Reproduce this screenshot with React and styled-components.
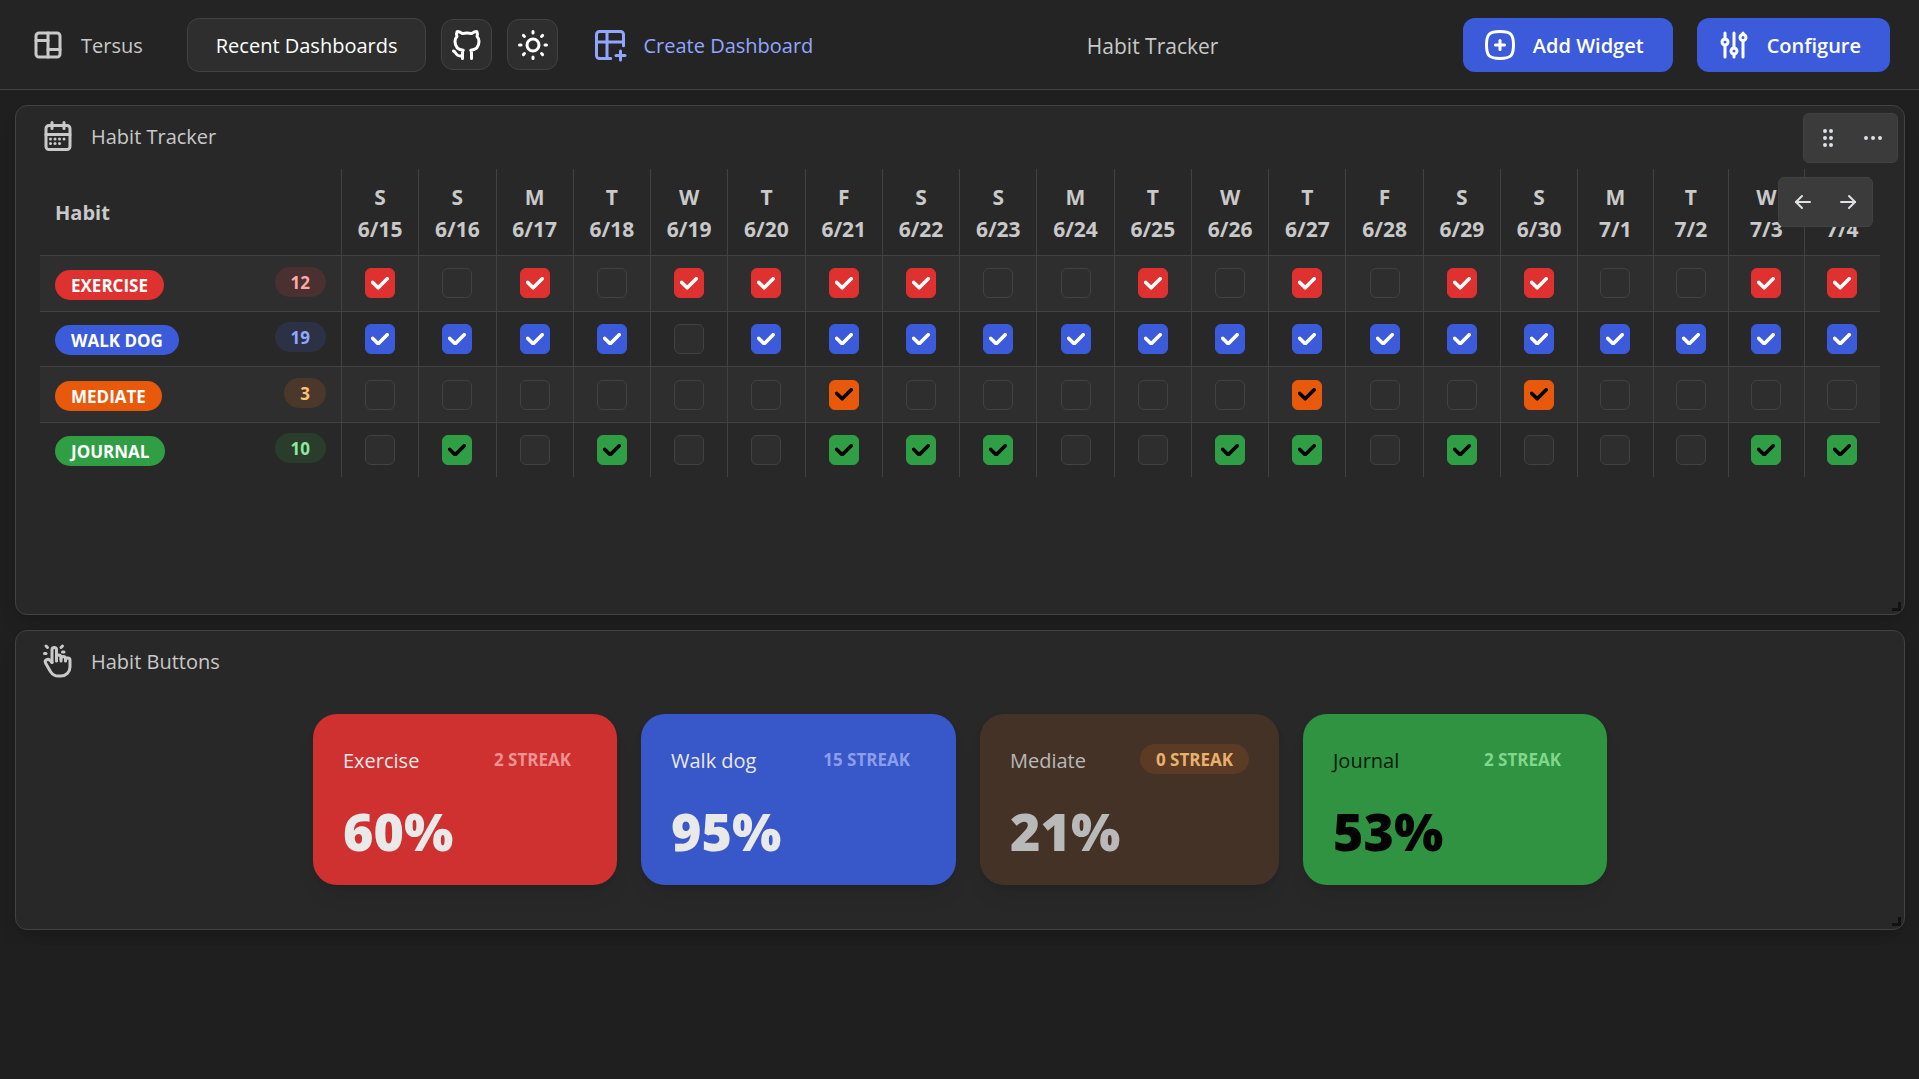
import React, { useState } from "react";
import styled, { createGlobalStyle } from "styled-components";
import {
  TbLayoutBoard,
  TbBrandGithub,
  TbSun,
  TbTablePlus,
  TbSquareRoundedPlus,
  TbAdjustments,
  TbCalendarMonth,
  TbHandClick,
  TbGripVertical,
  TbDots,
  TbArrowLeft,
  TbArrowRight,
} from "react-icons/tb";

const GlobalStyle = createGlobalStyle`
  *, *::before, *::after { box-sizing: border-box; }
  body {
    margin: 0;
    background: #1f1f1f;
    color: #c9c9c9;
    font-family: "Open Sans", "Noto Sans", sans-serif;
    font-size: 20px;
    line-height: 32px;
  }
  button, input { font: inherit; color: inherit; }
`;

const Header = styled.header`
  display: flex;
  align-items: center;
  justify-content: space-between;
  height: 90px;
  padding: 0 29px 0 30px;
  background: #242424;
  border-bottom: 1px solid #424242;
`;

const HeaderGroup = styled.div`
  display: flex;
  align-items: center;
  gap: ${(p) => p.$gap}px;
`;

const Brand = styled.a`
  display: flex;
  align-items: center;
  gap: 15px;
  margin-right: 29px;
  color: #c9c9c9;
  font-weight: 500;
  text-decoration: none;
`;

const Caption = styled.span`
  padding-top: 2px;
`;

const Button = styled.button`
  display: flex;
  align-items: center;
  gap: ${(p) => p.$gap || 15}px;
  height: 54px;
  padding: 0 28px 0 ${(p) => (p.$icon ? 18 : 28)}px;
  border: 1px solid ${(p) => p.$border || "transparent"};
  border-radius: 12px;
  background: ${(p) => p.$bg || "transparent"};
  background-origin: border-box;
  color: ${(p) => p.$color || "#ffffff"};
  font-weight: ${(p) => p.$weight || 600};
  white-space: nowrap;
  cursor: pointer;
`;

const SquareButton = styled.button`
  display: grid;
  place-items: center;
  width: 51px;
  height: 51px;
  padding: 0;
  border: 1px solid #424242;
  border-radius: 12px;
  background: #2e2e2e;
  color: #ffffff;
  cursor: pointer;
`;

const PageTitle = styled.h1`
  margin: 0;
  padding-top: 2px;
  font-size: 21px;
  font-weight: 500;
`;

const Board = styled.main`
  display: flex;
  flex-direction: column;
  gap: 15px;
  padding: 15px 14px 15px 15px;
`;

const Panel = styled.section`
  position: relative;
  min-height: ${(p) => p.$minHeight}px;
  padding: 12px 24px;
  border: 1px solid #424242;
  border-radius: 12px;
  background: #282828;
  box-shadow: 0 2px 5px rgba(0, 0, 0, 0.05), 0 15px 23px -8px rgba(0, 0, 0, 0.15);
`;

const PanelHeader = styled.div`
  display: flex;
  align-items: center;
  gap: 15px;
  height: 36px;
`;

const PanelTitle = styled.h2`
  margin: 0;
  padding-top: 2px;
  font-size: 20px;
  font-weight: 400;
`;

const FloatingTools = styled.div`
  position: absolute;
  top: ${(p) => p.$top}px;
  right: ${(p) => p.$right}px;
  z-index: 1;
  display: flex;
  gap: 3px;
  padding: 3px;
  border: 1px solid #424242;
  border-radius: 6px;
  background: #3b3b3b;
`;

const ToolButton = styled.button`
  display: grid;
  place-items: center;
  width: 42px;
  height: 42px;
  padding: 0;
  border: 0;
  border-radius: 6px;
  background: transparent;
  color: #dee2e6;
  cursor: pointer;
`;

const ResizeCorner = styled.span`
  position: absolute;
  right: 3px;
  bottom: 3px;
  width: 9px;
  height: 9px;
  border-right: 3px solid #121212;
  border-bottom: 3px solid #121212;
  cursor: se-resize;
`;

const TableArea = styled.div`
  position: relative;
  margin-top: 15px;
`;

const Table = styled.table`
  width: 100%;
  height: 308px;
  table-layout: fixed;
  border-collapse: separate;
  border-spacing: 0;
`;

const HabitCol = styled.col`
  width: 302px;
`;

const DayCol = styled.col`
  width: ${(p) => (p.$wide ? "4.2%" : "auto")};
`;

const HeadCell = styled.th`
  padding: 2px 0 0;
  border-right: 1px solid #424242;
  border-bottom: 1px solid #424242;
  font-weight: 700;
`;

const HabitHead = styled(HeadCell)`
  height: 87px;
  padding: 2px 15px 0;
  text-align: left;
`;

const DayHead = styled(HeadCell)`
  font-size: 21px;
  &:last-child { border-right: 0; }
`;

const Row = styled.tr`
  &:nth-child(odd) { background: #2e2e2e; }
  &:last-child > * { border-bottom: 0; }
`;

const HabitCell = styled.th`
  padding: 0 15px;
  border-right: 1px solid #424242;
  border-bottom: 1px solid #424242;
  font-weight: 400;
`;

const HabitLine = styled.div`
  display: flex;
  align-items: center;
  justify-content: space-between;
`;

const Pill = styled.span`
  height: 30px;
  padding: 0 16px;
  border-radius: 15px;
  background: ${(p) => p.$bg};
  color: ${(p) => p.$color};
  font-size: 17px;
  font-weight: 700;
  line-height: 31px;
  text-transform: uppercase;
  white-space: nowrap;
`;

const NamePill = styled(Pill)`
  margin-top: 3px;
`;

const CountPill = styled(Pill)`
  margin-bottom: 3px;
`;

const CheckCell = styled.td`
  padding: 0;
  border-right: 1px solid #424242;
  border-bottom: 1px solid #424242;
  &:last-child { border-right: 0; }
`;

const CheckLabel = styled.label`
  display: grid;
  place-items: center;
  width: 30px;
  height: 30px;
  margin: 0 auto;
  cursor: pointer;
  > * { grid-area: 1 / 1; }
`;

const CheckInput = styled.input`
  appearance: none;
  width: 30px;
  height: 30px;
  margin: 0;
  border: 1px solid #424242;
  border-radius: 6px;
  background: #2e2e2e;
  cursor: pointer;
  &:checked {
    border-color: ${(p) => p.$color};
    background: ${(p) => p.$color};
  }
`;

const CheckMark = styled.svg`
  z-index: 0;
  width: 18px;
  color: ${(p) => p.$color};
  pointer-events: none;
`;

const Cards = styled.div`
  display: flex;
  justify-content: center;
  gap: 24px;
  padding: 35px 0 32px;
`;

const Card = styled.button`
  width: ${(p) => p.$width}px;
  height: 171px;
  padding: 30px;
  border: 0;
  border-radius: 24px;
  background: ${(p) => p.$bg};
  color: ${(p) => p.$color};
  text-align: left;
  box-shadow: 0 2px 5px rgba(0, 0, 0, 0.05), 0 15px 23px -8px rgba(0, 0, 0, 0.1);
  cursor: pointer;
`;

const CardTop = styled.span`
  display: flex;
  align-items: center;
  justify-content: space-between;
  height: 30px;
`;

const CardName = styled.span`
  padding-top: 3px;
  color: ${(p) => p.$color};
`;

const Percent = styled.span`
  display: block;
  margin-top: 27px;
  font-size: 52px;
  font-weight: 800;
  line-height: 60px;
`;

const days = [
  "S 6/15", "S 6/16", "M 6/17", "T 6/18", "W 6/19", "T 6/20", "F 6/21",
  "S 6/22", "S 6/23", "M 6/24", "T 6/25", "W 6/26", "T 6/27", "F 6/28",
  "S 6/29", "S 6/30", "M 7/1", "T 7/2", "W 7/3", "T 7/4",
].map((d) => {
  const [weekday, date] = d.split(" ");
  return { weekday, date };
});

const habits = [
  {
    name: "Exercise", color: "#e03131", mark: "#ffffff",
    countBg: "#4a3031", countColor: "#ffa8a8", done: "10101111001010110011",
    card: { width: 304, bg: "#cf3030", color: "#e9e9e9", name: "#e9e9e9", streak: 2, streakBg: "transparent", streakColor: "#ed9392", percent: 60 },
  },
  {
    name: "Walk dog", color: "#3b5bdb", mark: "#ffffff",
    countBg: "#2c3146", countColor: "#91a7ff", done: "11110111111111111111",
    card: { width: 315, bg: "#3857c8", color: "#e9e9e9", name: "#e9e9e9", streak: 15, streakBg: "transparent", streakColor: "#8b9eec", percent: 95 },
  },
  {
    name: "Mediate", color: "#e8590c", mark: "#000000",
    countBg: "#4b382a", countColor: "#ffc078", done: "00000010000010010000",
    card: { width: 299, bg: "#453227", color: "#b9b9b9", name: "#b9b9b9", streak: 0, streakBg: "#5b3b24", streakColor: "#eab06e", percent: 21 },
  },
  {
    name: "Journal", color: "#2f9e44", mark: "#000000",
    countBg: "#2a3d2d", countColor: "#8ce99a", done: "01010011100110100011",
    card: { width: 304, bg: "#2f9341", color: "#040404", name: "#071a0b", streak: 2, streakBg: "transparent", streakColor: "#80d78d", percent: 53 },
  },
];

function DayCheck({ habit, day, initial }) {
  const [checked, setChecked] = useState(initial);
  return (
    <CheckLabel>
      <CheckInput
        type="checkbox"
        aria-label={`${habit.name} ${day.date}`}
        $color={habit.color}
        checked={checked}
        onChange={(e) => setChecked(e.target.checked)}
      />
      {checked && (
        <CheckMark viewBox="0 0 10 7" fill="none" $color={habit.mark} aria-hidden="true">
          <path
            d="M4 4.586L1.707 2.293A1 1 0 1 0 .293 3.707l3 3a.997.997 0 0 0 1.414 0l5-5A1 1 0 1 0 8.293.293L4 4.586z"
            fill="currentColor"
          />
        </CheckMark>
      )}
    </CheckLabel>
  );
}

function HabitTable() {
  return (
    <TableArea>
      <Table>
        <colgroup>
          <HabitCol />
          {days.map((d) => (
            <DayCol key={d.date} $wide={d.date.length > 3} />
          ))}
        </colgroup>
        <thead>
          <tr>
            <HabitHead scope="col">Habit</HabitHead>
            {days.map((d) => (
              <DayHead key={d.date} scope="col">
                {d.weekday}
                <br />
                {d.date}
              </DayHead>
            ))}
          </tr>
        </thead>
        <tbody>
          {habits.map((h) => (
            <Row key={h.name}>
              <HabitCell scope="row">
                <HabitLine>
                  <NamePill $bg={h.color} $color="#ffffff">{h.name}</NamePill>
                  <CountPill $bg={h.countBg} $color={h.countColor}>
                    {[...h.done].filter((c) => c === "1").length}
                  </CountPill>
                </HabitLine>
              </HabitCell>
              {days.map((d, i) => (
                <CheckCell key={d.date}>
                  <DayCheck habit={h} day={d} initial={h.done[i] === "1"} />
                </CheckCell>
              ))}
            </Row>
          ))}
        </tbody>
      </Table>
      <FloatingTools $top={8} $right={7}>
        <ToolButton aria-label="Earlier days"><TbArrowLeft size={24} /></ToolButton>
        <ToolButton aria-label="Later days"><TbArrowRight size={24} /></ToolButton>
      </FloatingTools>
    </TableArea>
  );
}

export default function App() {
  return (
    <>
      <GlobalStyle />
      <Header>
        <HeaderGroup $gap={15}>
          <Brand href="#">
            <TbLayoutBoard size={36} />
            <Caption>Tersus</Caption>
          </Brand>
          <Button $bg="#2e2e2e" $border="#424242" $weight={500}>
            <Caption>Recent Dashboards</Caption>
          </Button>
          <SquareButton aria-label="GitHub"><TbBrandGithub size={36} /></SquareButton>
          <SquareButton aria-label="Toggle colour scheme"><TbSun size={36} /></SquareButton>
          <Button $icon $color="#91a7ff" $weight={500}>
            <TbTablePlus size={36} />
            <Caption>Create Dashboard</Caption>
          </Button>
        </HeaderGroup>
        <PageTitle>Habit Tracker</PageTitle>
        <HeaderGroup $gap={24}>
          <Button $icon $bg="#3b5bdb">
            <TbSquareRoundedPlus size={36} />
            <Caption>Add Widget</Caption>
          </Button>
          <Button $icon $bg="#3b5bdb">
            <TbAdjustments size={36} />
            <Caption>Configure</Caption>
          </Button>
        </HeaderGroup>
      </Header>
      <Board>
        <Panel $minHeight={510}>
          <PanelHeader>
            <TbCalendarMonth size={36} />
            <PanelTitle>Habit Tracker</PanelTitle>
          </PanelHeader>
          <FloatingTools $top={7} $right={6}>
            <ToolButton aria-label="Move widget"><TbGripVertical size={24} /></ToolButton>
            <ToolButton aria-label="Widget menu"><TbDots size={24} /></ToolButton>
          </FloatingTools>
          <HabitTable />
          <ResizeCorner />
        </Panel>
        <Panel $minHeight={300}>
          <PanelHeader>
            <TbHandClick size={36} />
            <PanelTitle>Habit Buttons</PanelTitle>
          </PanelHeader>
          <Cards>
            {habits.map(({ name, card }) => (
              <Card key={name} $width={card.width} $bg={card.bg} $color={card.color}>
                <CardTop>
                  <CardName $color={card.name}>{name}</CardName>
                  <Pill $bg={card.streakBg} $color={card.streakColor}>{card.streak} Streak</Pill>
                </CardTop>
                <Percent>{card.percent}%</Percent>
              </Card>
            ))}
          </Cards>
          <ResizeCorner />
        </Panel>
      </Board>
    </>
  );
}
